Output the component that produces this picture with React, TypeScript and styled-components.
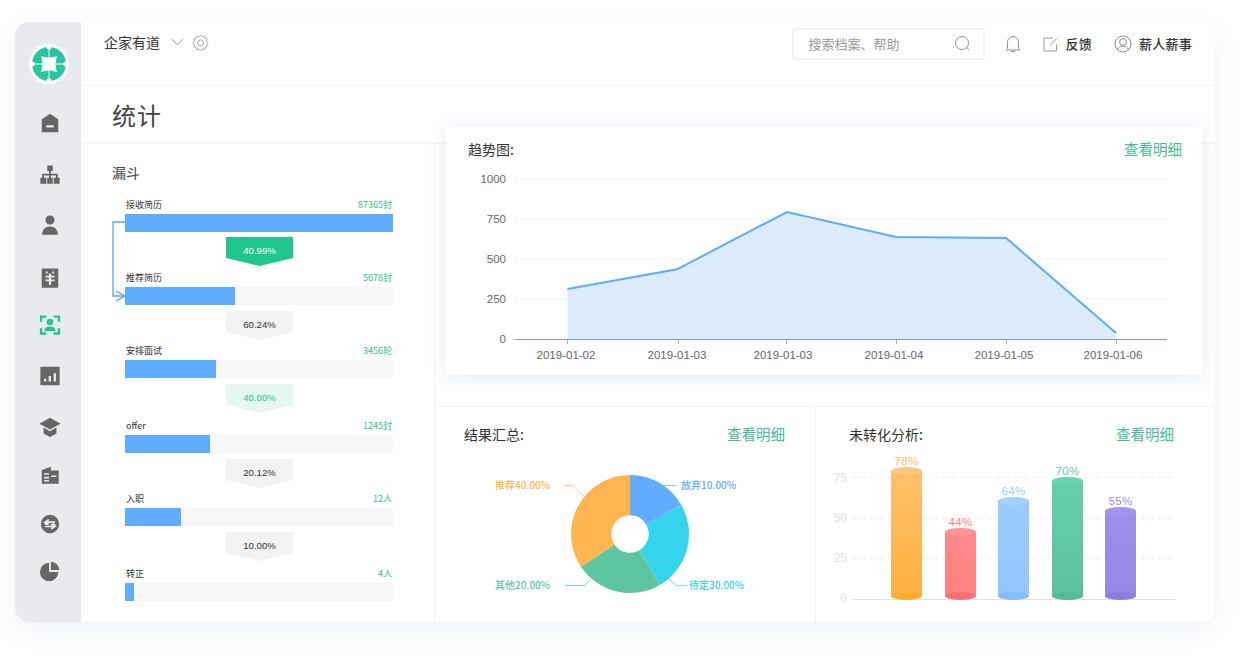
import React from 'react'
import styled, { createGlobalStyle } from 'styled-components'

const CJK = `'Noto Sans CJK SC', 'Noto Sans', sans-serif`
const LATIN = `'Liberation Sans', 'Noto Sans CJK SC', sans-serif`

const GlobalStyle = createGlobalStyle`
  html, body {
    margin: 0;
    padding: 0;
    background: #ffffff;
    font-family: ${CJK};
  }
  * {
    box-sizing: border-box;
  }
`

const funnel = [
  { label: '接收简历', value: '87365封', width: 268, rate: '40.99%', tone: 'strong', after: 39, pad: 5 },
  { label: '推荐简历', value: '5678封', width: 110, rate: '60.24%', tone: 'plain', after: 39, pad: 6 },
  { label: '安排面试', value: '3456轮', width: 91, rate: '40.00%', tone: 'soft', after: 41, pad: 6 },
  { label: 'offer', value: '1245封', width: 85, rate: '20.12%', tone: 'plain', after: 39, pad: 6 },
  { label: '入职', value: '12人', width: 56, rate: '10.00%', tone: 'plain', after: 41, pad: 6 },
  { label: '转正', value: '4人', width: 9 },
]

const sideIcons = [
  { top: 28, node: <path d="M12 2 L21 8 V22 H3 V8 Z M8 14.5 V17 H16 V14.5 Z" fillRule="evenodd" /> },
  {
    top: 30,
    node: <path d="M9 1.5 H15 V7.5 H13 V10.5 H20.5 V15 H22.5 V21.5 H16 V15 H18.5 V12.5 H13 V15 H15 V21.5 H9 V15 H11 V12.5 H5.5 V15 H8 V21.5 H1.5 V15 H3.5 V10.5 H11 V7.5 H9 Z" />,
  },
  {
    top: 28,
    node: (
      <>
        <circle cx="12" cy="6.5" r="5" />
        <path d="M3.5 22.5 C3.5 16.5 7 13.5 12 13.5 C17 13.5 20.5 16.5 20.5 22.5 Z" />
      </>
    ),
  },
  {
    top: 31,
    node: <path d="M3 1.5 H21 V22.5 H3 Z M7.5 5 V7 H10.8 V9.5 H7 V11.5 H10.8 V13.5 H7 V15.5 H10.8 V19.5 H13.2 V15.5 H17 V13.5 H13.2 V11.5 H17 V9.5 H13.2 V7 H16.5 V5 H14.5 V7 H9.5 V5 Z" fillRule="evenodd" />,
  },
  {
    top: 25,
    color: '#1fc68d',
    node: (
      <>
        <path d="M1 8.5 V1.5 H8 V4 H3.5 V8.5 Z M16 1.5 H23 V8.5 H20.5 V4 H16 Z M1 15.5 H3.5 V20 H8 V22.5 H1 Z M20.5 15.5 H23 V22.5 H16 V20 H20.5 Z" />
        <circle cx="12" cy="8.8" r="3.6" />
        <path d="M5.8 18.5 C6.2 15 8.8 13.6 12 13.6 C15.2 13.6 17.8 15 18.2 18.5 Z" />
      </>
    ),
  },
  {
    top: 29,
    node: <path d="M1.5 2 H22.5 V22 H1.5 Z M5.5 15 V18 H8 V15 Z M10.5 12 V18 H13 V12 Z M16 9 V18 H18.5 V9 Z" fillRule="evenodd" />,
  },
  {
    top: 29,
    node: (
      <>
        <path d="M12 2 L23.5 8.5 L12 14.8 L.5 8.5 Z" />
        <path d="M5 12.5 L12 16.5 L19 12.5 V19 L12 23 L5 19 Z" />
      </>
    ),
  },
  {
    top: 26,
    node: <path d="M3 6.5 L13 3 V7 H21.5 V21.5 H3 Z M5.5 10 V11.8 H11 V10 Z M13.5 12.5 V14.2 H19 V12.5 Z M5.5 14 V15.8 H11 V14 Z M5.5 17.5 V19.2 H11 V17.5 Z" fillRule="evenodd" />,
  },
  {
    top: 27,
    node: <path d="M12 2 A10 10 0 1 0 12 22 A10 10 0 1 0 12 2 Z M10 6.5 L11.3 7.7 L10 9 H17.5 V10.8 H10 L11.3 12 L10 13.2 H7 L5 10 Z M14 11.5 H17 L19 14.8 L14 18 L12.7 16.8 L14 15.6 H6.5 V13.8 H14 L12.7 12.7 Z" fillRule="evenodd" />,
  },
  {
    top: 25,
    node: (
      <>
        <path d="M11 3 V13 H21 A10 10 0 1 1 11 3 Z" />
        <path d="M13 1.8 A10 10 0 0 1 22.2 11 H13 Z" />
      </>
    ),
  },
]

const slice = (from: number, to: number, cx: number, cy: number) => {
  const point = (angle: number, radius: number) => {
    const a = ((angle - 90) * Math.PI) / 180
    return `${(cx + radius * Math.cos(a)).toFixed(2)} ${(cy + radius * Math.sin(a)).toFixed(2)}`
  }
  const large = to - from > 180 ? 1 : 0
  return `M${point(from, 59)} A59 59 0 ${large} 1 ${point(to, 59)} L${point(to, 18.7)} A18.7 18.7 0 ${large} 0 ${point(from, 18.7)} Z`
}

const pie = [
  { from: 0, to: 60.5, color: '#60adff' },
  { from: 60.5, to: 149.6, color: '#35d4ee' },
  { from: 149.6, to: 236.2, color: '#5ec5a1' },
  { from: 236.2, to: 360, color: '#ffb64f' },
]

const pieLabels = [
  { x: 246, y: 29, color: '#60adff', text: '放弃10.00%', line: 'M228 25.5 H241.7' },
  { x: 254, y: 129, color: '#35d4ee', text: '待定30.00%', line: 'M233.3 118.3 L241.7 125.7 H252.3' },
  { x: 60, y: 129, color: '#5ec5a1', text: '其他20.00%', line: 'M130 125.5 H150 L155.7 119.3' },
  { x: 60, y: 29, color: '#ffb64f', text: '推荐40.00%', line: 'M130 25.5 H137.7 L149.3 36.7' },
]

const bars = [
  { x: 75, top: 57, value: '78%', label: '#ffbb66', a: '#ffc06a', b: '#ffb040', cap: '#ffc77f', base: '#ffad30' },
  { x: 129, top: 118, value: '44%', label: '#ff8585', a: '#ff8a8a', b: '#ff8080', cap: '#ff9696', base: '#ff6f73' },
  { x: 182, top: 87, value: '64%', label: '#9ccbff', a: '#9acbff', b: '#93c7ff', cap: '#a6d1ff', base: '#80bfff' },
  { x: 236, top: 67, value: '70%', label: '#5fcda5', a: '#66cfa9', b: '#5cc29d', cap: '#67d5ad', base: '#54bb96' },
  { x: 289, top: 97, value: '55%', label: '#9d8ff0', a: '#9c90ec', b: '#9587e6', cap: '#a295ee', base: '#8b7ddf' },
]

const App = () => (
  <>
    <GlobalStyle />
    <Page>
      <Window>
        <Sidebar>
          <Logo>
            <svg width="36" height="36" viewBox="0 0 36 36">
              <path
                fill="#26c6a0"
                d="M18 1 A17 17 0 1 1 18 35 A17 17 0 1 1 18 1 Z M9.7 9.7 C13 11.8 23 11.8 26.3 9.7 C24.2 13 24.2 23 26.3 26.3 C23 24.2 13 24.2 9.7 26.3 C11.8 23 11.8 13 9.7 9.7 Z"
                fillRule="evenodd"
              />
              <path
                fill="#fff"
                d="M15.5 0 H20.5 V2 L18.4 4.2 V11 H17.6 V4.2 L15.5 2 Z M15.5 36 H20.5 V34 L18.4 31.8 V25 H17.6 V31.8 L15.5 34 Z M0 15.5 V20.5 H2 L4.2 18.4 H11 V17.6 H4.2 L2 15.5 Z M36 15.5 V20.5 H34 L31.8 18.4 H25 V17.6 H31.8 L34 15.5 Z"
              />
            </svg>
          </Logo>
          {sideIcons.map((icon, i) => (
            <SideIcon key={i} $top={icon.top} $color={icon.color} viewBox="0 0 24 24">
              {icon.node}
            </SideIcon>
          ))}
        </Sidebar>
        <Main>
          <Header>
            <Company>
              <CompanyName>企家有道</CompanyName>
              <svg width="13" height="8" viewBox="0 0 14 8" fill="none" stroke="#8a8a8a">
                <path d="M1 1 L7 7 L13 1" />
              </svg>
              <svg width="17" height="17" viewBox="0 0 24 24" fill="none" stroke="#9a9a9a" strokeWidth="1.2">
                <path d="M12 1.5 L14.2 3.9 L17.3 3.1 L18.4 6.1 L21.5 7.1 L20.8 10.2 L22.8 12.5 L20.8 14.8 L21.5 17.9 L18.4 18.9 L17.3 21.9 L14.2 21.1 L12 23.5 L9.8 21.1 L6.7 21.9 L5.6 18.9 L2.5 17.9 L3.2 14.8 L1.2 12.5 L3.2 10.2 L2.5 7.1 L5.6 6.1 L6.7 3.1 L9.8 3.9 Z" />
                <circle cx="12" cy="12.5" r="4.2" />
              </svg>
            </Company>
            <Tools>
              <Search>
                <span>搜索档案、帮助</span>
                <svg width="17" height="17" viewBox="0 0 17 17" fill="none" stroke="#8f8f8f">
                  <circle cx="8" cy="8" r="6.5" />
                  <path d="M12.8 12.8 L15.5 15.2" />
                </svg>
              </Search>
              <BellSlot>
                <svg width="16" height="18" viewBox="1 0 16 18" fill="none" stroke="#8f8f8f">
                  <path d="M2.5 13.5 V7.5 C2.5 4 5 1.5 8 1.5 C11 1.5 13.5 4 13.5 7.5 V13.5 L15 15 H1 Z" />
                  <path d="M6 16.5 H10" />
                </svg>
              </BellSlot>
              <Feedback>
                <svg width="15" height="15" viewBox="0 0 15 15" fill="none" stroke="#9a9a9a">
                  <path d="M13.5 7.5 V14 H1 V1 H10" />
                  <path d="M7 8.5 L13.8 1.5" />
                </svg>
                <ToolText>反馈</ToolText>
              </Feedback>
              <Account>
                <svg width="18" height="18" viewBox="0 0 18 18" fill="none" stroke="#8a8a8a">
                  <circle cx="9" cy="9" r="8" />
                  <circle cx="9" cy="7" r="3.4" />
                  <path d="M3.5 14.8 C4.5 12.2 6.5 11.2 9 11.2 C11.5 11.2 13.5 12.2 14.5 14.8" />
                </svg>
                <ToolText>薪人薪事</ToolText>
              </Account>
            </Tools>
          </Header>
          <TitleBar>
            <PageTitle>统计</PageTitle>
          </TitleBar>
          <Body>
            <FunnelColumn>
              <FunnelTitle>漏斗</FunnelTitle>
              <FunnelList>
                <Connector width="14" height="82" viewBox="0 0 14 82" fill="none" stroke="#4ea8ff" strokeWidth="1.3">
                  <path d="M13 1 H1 V75 H13" />
                  <path d="M4 70 L13 75 L4 80" />
                </Connector>
                {funnel.map(stage => (
                  <div key={stage.label}>
                    <StageHead>
                      <StageName>{stage.label}</StageName>
                      <StageValue>{stage.value}</StageValue>
                    </StageHead>
                    <Track>
                      <Fill style={{ width: stage.width }} />
                    </Track>
                    {stage.rate && (
                      <RateSlot $height={stage.after} $pad={stage.pad}>
                        <Rate $tone={stage.tone}>{stage.rate}</Rate>
                      </RateSlot>
                    )}
                  </div>
                ))}
              </FunnelList>
            </FunnelColumn>
            <Charts>
              <TrendCard>
                <CardHead>
                  <CardTitle>趋势图:</CardTitle>
                  <DetailLink>查看明细</DetailLink>
                </CardHead>
                <svg width="756" height="206" viewBox="0 0 756 206" fontFamily={LATIN}>
                  <g stroke="#ececec" strokeDasharray="3 2">
                    <path d="M69 10 H721" />
                    <path d="M69 50 H721" />
                    <path d="M69 90 H721" />
                    <path d="M69 130 H721" />
                  </g>
                  <path d="M121.5 120 L231 100.3 L341 43 L450 68 L560 69 L670 164 V170 H121.5 Z" fill="#dcecfd" />
                  <path d="M121.5 120 L231 100.3 L341 43 L450 68 L560 69 L670 164" fill="none" stroke="#5cacff" strokeWidth="2" />
                  <path d="M69 170.5 H721" stroke="#8a96a3" />
                  <g stroke="#b0b7bf">
                    {[121, 232, 340, 450, 560, 670].map(x => (
                      <path key={x} d={`M${x}.5 171 V175`} />
                    ))}
                  </g>
                  <g fill="#666" fontSize="11.5" textAnchor="end">
                    {['1000', '750', '500', '250', '0'].map((t, i) => (
                      <text key={t} x="60" y={14 + i * 40}>
                        {t}
                      </text>
                    ))}
                  </g>
                  <g fill="#666" fontSize="11.5" textAnchor="middle">
                    <text x="120" y="190">2019-01-02</text>
                    <text x="231" y="190">2019-01-03</text>
                    <text x="337" y="190">2019-01-03</text>
                    <text x="448" y="190">2019-01-04</text>
                    <text x="558" y="190">2019-01-05</text>
                    <text x="667" y="190">2019-01-06</text>
                  </g>
                </svg>
              </TrendCard>
              <BottomRow>
                <PiePanel>
                  <PanelHead>
                    <CardTitle>结果汇总:</CardTitle>
                    <DetailLink>查看明细</DetailLink>
                  </PanelHead>
                  <svg width="380" height="160" viewBox="0 0 380 160" fontFamily={CJK}>
                    {pie.map(p => (
                      <path key={p.color} d={slice(p.from, p.to, 195, 74)} fill={p.color} />
                    ))}
                    {pieLabels.map(l => (
                      <g key={l.text}>
                        <path d={l.line} fill="none" stroke={l.color} strokeOpacity="0.75" />
                        <text x={l.x} y={l.y} fill={l.color} fontSize="10" fontWeight="500">
                          {l.text}
                        </text>
                      </g>
                    ))}
                  </svg>
                </PiePanel>
                <BarPanel>
                  <BarHead>
                    <CardTitle>未转化分析:</CardTitle>
                    <DetailLink>查看明细</DetailLink>
                  </BarHead>
                  <svg width="399" height="196" viewBox="0 0 399 196" fontFamily={LATIN}>
                    <defs>
                      {bars.map(b => (
                        <linearGradient key={b.value} id={`bar-${b.value.slice(0, 2)}`} x1="0" y1="0" x2="0" y2="1">
                          <stop offset="0" stopColor={b.a} />
                          <stop offset="1" stopColor={b.b} />
                        </linearGradient>
                      ))}
                    </defs>
                    <g stroke="#eeeeee" strokeDasharray="5 4">
                      <path d="M36 51.5 H359" />
                      <path d="M36 92.5 H359" />
                      <path d="M36 132.5 H359" />
                    </g>
                    <path d="M36 173.5 H359" stroke="#e2e2e2" />
                    <g fill="#e2e2e2" fontSize="12" textAnchor="end">
                      <text x="31" y="55.5">75</text>
                      <text x="31" y="96">50</text>
                      <text x="31" y="136">25</text>
                      <text x="31" y="176">0</text>
                    </g>
                    {bars.map(b => (
                      <g key={b.value}>
                        <rect x={b.x} y={b.top - 12} width="31" height={182 - b.top} fill={`url(#bar-${b.value.slice(0, 2)})`} />
                        <ellipse cx={b.x + 15.5} cy="170" rx="15.5" ry="4" fill={b.base} />
                        <ellipse cx={b.x + 15.5} cy={b.top - 12} rx="15.5" ry="4" fill={b.cap} />
                        <text x={b.x + 15.5} y={b.top - 18} fill={b.label} fontSize="11.5" textAnchor="middle" letterSpacing="0.4">
                          {b.value}
                        </text>
                      </g>
                    ))}
                  </svg>
                </BarPanel>
              </BottomRow>
            </Charts>
          </Body>
        </Main>
      </Window>
    </Page>
  </>
)

const Page = styled.div`
  width: 1247px;
  height: 660px;
  padding: 22px 32px 38px 15px;
  overflow: hidden;
  background: #ffffff;
`

const Window = styled.div`
  display: flex;
  width: 1200px;
  height: 600px;
  border-radius: 14px;
  overflow: hidden;
  background: #ffffff;
  box-shadow: 0 8px 28px rgba(196, 214, 232, 0.3);
`

const Sidebar = styled.nav`
  flex: 0 0 66px;
  display: flex;
  flex-direction: column;
  align-items: center;
  padding-top: 22px;
  background: #e9eaee;
`

const Logo = styled.div`
  display: flex;
  align-items: center;
  justify-content: center;
  width: 40px;
  height: 40px;
  margin-left: 2px;
  border-radius: 50%;
  background: #ffffff;
`

const SideIcon = styled.svg<{ $top: number; $color?: string }>`
  flex: none;
  width: 22px;
  height: 22px;
  margin-top: ${p => p.$top}px;
  margin-left: 4px;
  fill: ${p => p.$color || '#666666'};
`

const Main = styled.div`
  flex: 1;
  display: flex;
  flex-direction: column;
  min-width: 0;
`

const Header = styled.header`
  flex: 0 0 64px;
  display: flex;
  justify-content: space-between;
  padding: 6px 23px 0 23px;
  border-bottom: 1px solid #f7f7f8;
`

const Company = styled.div`
  display: flex;
  align-items: center;
  align-self: flex-start;
  height: 28px;
  gap: 8px;
`

const CompanyName = styled.span`
  margin-right: 3px;
  font-size: 14px;
  color: #333333;
`

const Tools = styled.div`
  display: flex;
  align-items: center;
  align-self: flex-start;
  height: 32px;
`

const Search = styled.div`
  display: flex;
  align-items: center;
  justify-content: space-between;
  width: 193px;
  height: 32px;
  padding: 0 12px 2px 14px;
  border: 2px solid #f1f1f1;
  border-radius: 3px;
  font-size: 13px;
  color: #9a9a9a;
`

const BellSlot = styled.div`
  display: flex;
  margin-left: 21px;
`

const Feedback = styled.div`
  display: flex;
  align-items: center;
  gap: 7px;
  margin-left: 21px;
`

const Account = styled.div`
  display: flex;
  align-items: center;
  gap: 7px;
  margin-left: 22px;
`

const ToolText = styled.span`
  padding-bottom: 2px;
  font-size: 13px;
  font-weight: 500;
  letter-spacing: 0.25px;
  color: #333333;
`

const TitleBar = styled.div`
  flex: 0 0 58px;
  display: flex;
  align-items: center;
  padding-left: 31px;
  border-bottom: 2px solid #f6f6f7;
`

const PageTitle = styled.h1`
  margin: 0;
  font-size: 24px;
  font-weight: 400;
  letter-spacing: 1px;
  color: #444444;
`

const Body = styled.div`
  flex: 1;
  display: flex;
  min-height: 0;
`

const FunnelColumn = styled.section`
  flex: 0 0 354px;
  padding: 17px 0 0 31px;
  border-right: 1px solid #f3f3f4;
`

const FunnelTitle = styled.h2`
  margin: 0;
  font-size: 14px;
  line-height: 22px;
  font-weight: 400;
  color: #444444;
`

const FunnelList = styled.div`
  position: relative;
  width: 268px;
  margin: 15px 0 0 13px;
`

const Connector = styled.svg`
  position: absolute;
  top: 23px;
  left: -13px;
  z-index: 1;
`

const StageHead = styled.div`
  display: flex;
  align-items: center;
  justify-content: space-between;
  height: 16px;
  padding: 0 1px 4px;
`

const StageName = styled.span`
  font-size: 9px;
  color: #333333;
`

const StageValue = styled.span`
  font-size: 9px;
  color: #1fc68d;
`

const Track = styled.div`
  height: 18px;
  background: #f7f7f7;
`

const Fill = styled.div`
  height: 100%;
  background: #60adff;
`

const RateSlot = styled.div<{ $height?: number; $pad?: number }>`
  display: flex;
  justify-content: center;
  height: ${p => p.$height}px;
  padding-top: ${p => p.$pad}px;
  padding-left: 1px;
`

const rateColors: Record<string, string> = {
  strong: 'background: #1fc68d; color: #ffffff;',
  plain: 'background: #f2f2f2; color: #333333;',
  soft: 'background: #e6f7f1; color: #1fc68d;',
}

const Rate = styled.div<{ $tone?: string }>`
  display: flex;
  align-items: flex-start;
  justify-content: center;
  width: 67px;
  height: 29px;
  padding-top: 8px;
  font-family: ${LATIN};
  font-size: 9.6px;
  line-height: 12px;
  clip-path: polygon(0 0, 100% 0, 100% 72%, 50% 100%, 0 72%);
  ${p => rateColors[p.$tone || 'plain']}
`

const Charts = styled.div`
  flex: 1;
  display: flex;
  flex-direction: column;
  min-width: 0;
`

const TrendCard = styled.section`
  position: relative;
  z-index: 1;
  flex: none;
  width: 756px;
  height: 248px;
  margin: -17px 0 31px 11px;
  background: #ffffff;
  box-shadow: 0 2px 18px rgba(190, 210, 230, 0.45);
`

const CardHead = styled.div`
  display: flex;
  align-items: center;
  justify-content: space-between;
  height: 42px;
  padding: 1px 20px 0 22px;
`

const CardTitle = styled.h3`
  margin: 0;
  font-size: 14px;
  font-weight: 400;
  color: #333333;
`

const DetailLink = styled.span`
  font-size: 14.5px;
  color: #46bd93;
`

const BottomRow = styled.div`
  flex: 1;
  display: flex;
  min-height: 0;
  border-top: 1px solid #f3f3f4;
`

const PiePanel = styled.section`
  flex: 0 0 381px;
  border-right: 1px solid #f3f3f4;
`

const PanelHead = styled.div`
  display: flex;
  align-items: center;
  justify-content: space-between;
  height: 53px;
  padding: 0 30px 0 29px;
`

const BarPanel = styled.section`
  flex: 1;
  min-width: 0;
`

const BarHead = styled.div`
  display: flex;
  align-items: center;
  justify-content: space-between;
  height: 53px;
  margin-bottom: -34px;
  padding: 0 41px 0 33px;
`

export default React.memo(App)
